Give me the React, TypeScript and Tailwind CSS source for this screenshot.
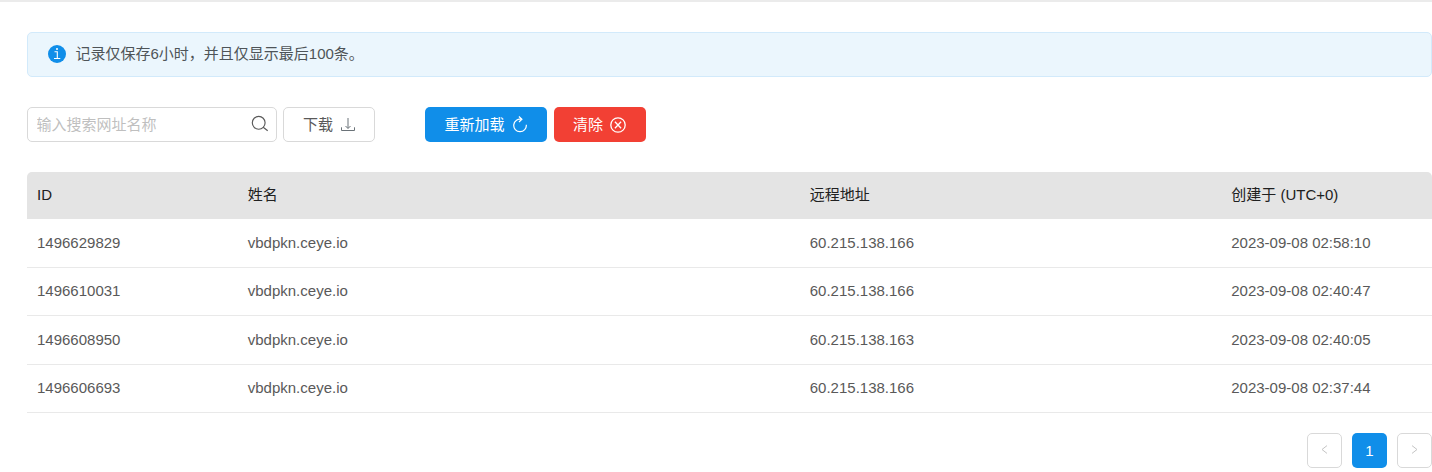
import React from "react";

const records = [
  { id: "1496629829", name: "vbdpkn.ceye.io", addr: "60.215.138.166", at: "2023-09-08 02:58:10", h: "h-[49px]" },
  { id: "1496610031", name: "vbdpkn.ceye.io", addr: "60.215.138.166", at: "2023-09-08 02:40:47", h: "h-[48px] pb-px" },
  { id: "1496608950", name: "vbdpkn.ceye.io", addr: "60.215.138.163", at: "2023-09-08 02:40:05", h: "h-[49px]" },
  { id: "1496606693", name: "vbdpkn.ceye.io", addr: "60.215.138.166", at: "2023-09-08 02:37:44", h: "h-[48px] pb-px" },
];

const columns = "grid grid-cols-[15%_40%_30%_15%] items-center [&>*]:pl-[10px]";

function InfoIcon() {
  return (
    <svg width="18" height="18" viewBox="0 0 18 18" className="shrink-0">
      <circle cx="9" cy="9" r="9" fill="#108ee9" />
      <circle cx="9" cy="4" r="1" fill="#fff" />
      <path d="M6.5 6.7H9.3V13.5M6 13.5H12.3" fill="none" stroke="#fff" strokeWidth="1.1" />
    </svg>
  );
}

function SearchIcon() {
  return (
    <svg width="18" height="18" viewBox="0 0 18 18" fill="none" stroke="#595959" strokeWidth="1.15">
      <circle cx="7.7" cy="7.8" r="6.4" />
      <path d="M12.2 12.3L16.7 15.8" />
    </svg>
  );
}

function DownloadIcon() {
  return (
    <svg width="14" height="15" viewBox="0 0 14 15" fill="none" stroke="#6a7278" strokeWidth="1">
      <path d="M7 1V11.2M4.5 9L7 11.5L9.5 9M.5 10.3V13.5H13.5V10.3" />
    </svg>
  );
}

function ReloadIcon() {
  return (
    <svg width="14" height="17" viewBox="0 0 14 17" fill="none" stroke="#fff" strokeWidth="1.2">
      <path d="M13.3 8.7A6.3 6.3 0 1 1 8.6 3.3M5.9.5L8.9 3.3L6 6" />
    </svg>
  );
}

function ClearIcon() {
  return (
    <svg width="16" height="16" viewBox="0 0 16 16" fill="none" stroke="#fff" strokeWidth="1.3">
      <circle cx="8" cy="8" r="7.2" />
      <path d="M4.9 4.7L11.1 11.3M11.1 4.7L4.9 11.3" />
    </svg>
  );
}

function Chevron({ d }: { d: string }) {
  return (
    <svg width="7" height="9" viewBox="0 0 7 9" fill="none" stroke="#c4c4c4" strokeWidth="1">
      <path d={d} />
    </svg>
  );
}

export default function App() {
  return (
    <div className="h-[472px] w-[1432px] overflow-hidden border-t-2 border-[#ebebeb] bg-white pl-[27px] font-['Liberation_Sans','Noto_Sans_CJK_SC',sans-serif] text-[15px] leading-[22px] text-[#595959]">
      <div className="mt-[30px] flex h-[45px] items-center rounded-[5px] border border-[#d2eafb] bg-[#ebf6fd] pb-px pl-5">
        <InfoIcon />
        <span className="ml-[9.5px] text-[#4e5458]">记录仅保存6小时，并且仅显示最后100条。</span>
      </div>

      <div className="mt-[30px] flex h-[35px]">
        <div className="flex w-[250px] items-center justify-between rounded-[5px] border border-[#d9d9d9] pr-[7px] pb-px pl-[8.5px]">
          <input placeholder="输入搜索网址名称" className="w-[180px] bg-transparent pt-[2px] outline-none placeholder:text-[#bfbfbf]" />
          <SearchIcon />
        </div>
        <button className="ml-[6px] flex w-[92px] items-center rounded-[5px] border border-[#d9d9d9] pl-[19px]">
          下载
          <span className="ml-2"><DownloadIcon /></span>
        </button>
        <button className="ml-[50px] flex w-[122px] items-center rounded-[5px] bg-[#108ee9] pl-[19.5px] text-white">
          重新加载
          <span className="ml-[8.5px]"><ReloadIcon /></span>
        </button>
        <button className="ml-[7px] flex w-[92px] items-center rounded-[5px] bg-[#f24034] pl-[19px] text-white">
          清除
          <span className="ml-[7px]"><ClearIcon /></span>
        </button>
      </div>

      <div className="mt-[30px]">
        <div className={`${columns} h-[47px] rounded-t-[5px] bg-[#e4e4e4] pb-[2px] text-[#202020]`}>
          <span>ID</span>
          <span>姓名</span>
          <span>远程地址</span>
          <span>创建于 (UTC+0)</span>
        </div>
        {records.map((r) => (
          <div key={r.id} className={`${columns} ${r.h} border-b border-[#e9e9e9]`}>
            <span>{r.id}</span>
            <span>{r.name}</span>
            <span>{r.addr}</span>
            <span>{r.at}</span>
          </div>
        ))}
      </div>

      <div className="mt-5 flex justify-end gap-[10px]">
        <button className="flex size-[35px] items-center justify-center rounded-[5px] border border-[#d9d9d9] pb-[3px]">
          <Chevron d="M6 .6L1 4.5L6 8.4" />
        </button>
        <button className="flex size-[35px] items-center justify-center rounded-[5px] bg-[#108ee9] pt-px text-white">1</button>
        <button className="flex size-[35px] items-center justify-center rounded-[5px] border border-[#d9d9d9] pb-[3px]">
          <Chevron d="M1 .6L6 4.5L1 8.4" />
        </button>
      </div>
    </div>
  );
}
